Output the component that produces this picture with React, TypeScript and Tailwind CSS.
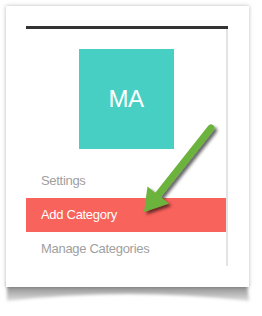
const menu = [
  { label: "Settings", active: false },
  { label: "Add Category", active: true },
  { label: "Manage Categories", active: false },
];

function CurlShadow() {
  return (
    <svg
      className="absolute left-0 top-0 -z-10"
      width="262"
      height="316"
      viewBox="0 0 262 316"
    >
      <defs>
        <filter id="curl" x="-10%" y="-50%" width="120%" height="200%">
          <feGaussianBlur stdDeviation="1.8" />
        </filter>
        <linearGradient id="curlFill" x1="0" y1="0" x2="0" y2="1">
          <stop offset="0" stopColor="#555" />
          <stop offset="0.5" stopColor="#888" />
          <stop offset="1" stopColor="#d0d0d0" />
        </linearGradient>
      </defs>
      <path
        d="M7 282 L247 282 L249 301 Q127 287 7 301 Z"
        fill="url(#curlFill)"
        opacity="0.7"
        filter="url(#curl)"
      />
    </svg>
  );
}

function Arrow() {
  return (
    <svg
      className="pointer-events-none absolute left-0 top-0"
      width="262"
      height="316"
      viewBox="0 0 262 316"
    >
      <defs>
        <filter id="arrowShadow" x="-30%" y="-30%" width="160%" height="160%">
          <feDropShadow dx="2.5" dy="2.5" stdDeviation="1.4" floodColor="#000" floodOpacity="0.6" />
        </filter>
      </defs>
      <g filter="url(#arrowShadow)">
        <line
          x1="211"
          y1="128"
          x2="158"
          y2="195"
          stroke="#6cb33e"
          strokeWidth="7"
          strokeLinecap="round"
        />
        <polygon points="144,212 147.5,186.5 169,203.5" fill="#6cb33e" />
      </g>
    </svg>
  );
}

export default function App() {
  return (
    <div
      className="relative isolate h-[316px] w-[262px] overflow-hidden bg-white"
      style={{ fontFamily: '"Liberation Sans", Arial, sans-serif' }}
    >
      <CurlShadow />
      <div className="p-[6px]">
        <div className="h-[281px] w-[243px] bg-white px-[20px] pt-[20px] pb-[20px] shadow-[0_0_4px_rgba(0,0,0,0.28)]">
          <div className="h-[3px] w-[202px] bg-[#333333]" />
          <div className="w-[202px] border-r-2 border-[#e3e3e3] pt-[20px]">
            <div className="mx-auto flex h-[100px] w-[95px] items-center justify-center bg-[#48cfc3] text-[24px] tracking-[-0.5px] text-white">
              MA
            </div>
            <div className="mt-[15px]">
              {menu.map((item) => (
                <div
                  key={item.label}
                  className={`flex h-[34px] items-center pl-[15px] text-[13px] tracking-[-0.3px] ${
                    item.active ? "bg-[#f8635c] text-white" : "text-[#a0a0a0]"
                  }`}
                >
                  {item.label}
                </div>
              ))}
            </div>
          </div>
        </div>
      </div>
      <Arrow />
    </div>
  );
}
